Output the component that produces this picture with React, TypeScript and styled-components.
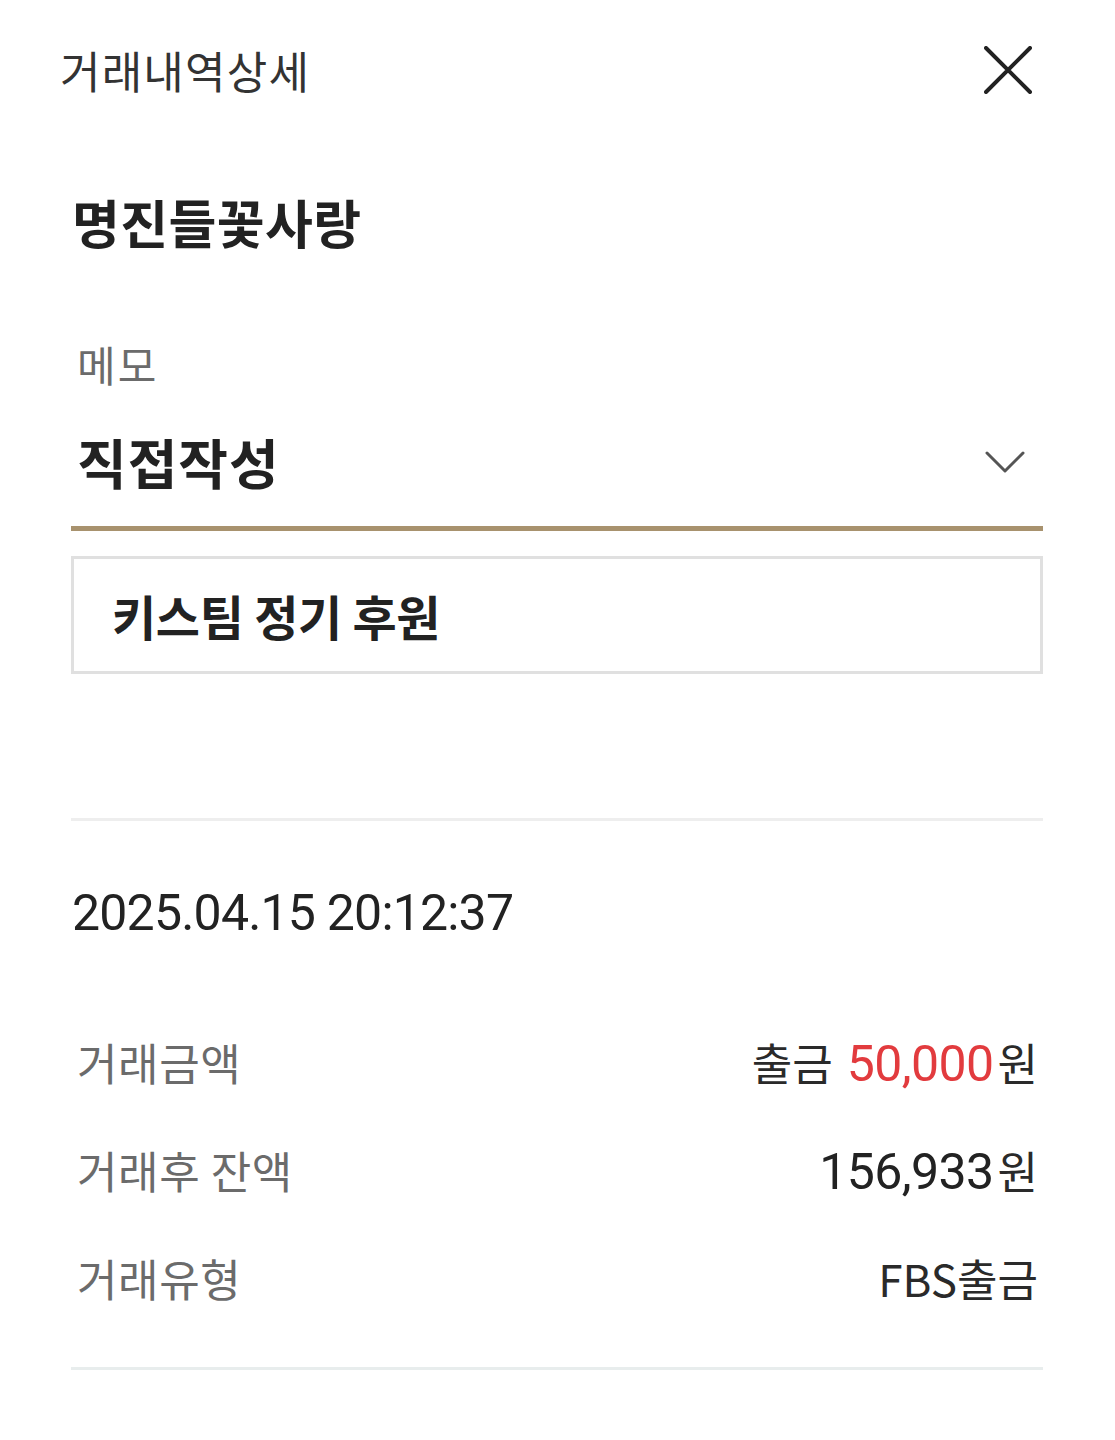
import React from "react";
import styled, { createGlobalStyle } from "styled-components";

const Global = createGlobalStyle`
  html, body { margin: 0; padding: 0; background: #ffffff; }
  body { font-family: "Noto Sans CJK KR", "Noto Sans", sans-serif; color: #222; }
  * { box-sizing: border-box; }
`;

const Page = styled.div`
  width: 1115px;
  min-height: 1440px;
  background: #fff;
`;

const Header = styled.header`
  height: 140px;
  display: flex;
  align-items: center;
  justify-content: space-between;
  padding: 0 83px 0 60px;
`;

const Title = styled.h1`
  margin: 0;
  font-size: 44px;
  font-weight: 400;
  color: #333;
  line-height: 60px;
  letter-spacing: 1.2px;
`;

const CloseButton = styled.button`
  width: 48px;
  height: 48px;
  padding: 0;
  border: 0;
  background: none;
  display: flex;
`;

const Content = styled.main`
  padding: 0 72px 0 71px;
  display: flex;
  flex-direction: column;
`;

const Name = styled.div`
  margin-top: 52px;
  height: 60px;
  line-height: 60px;
  font-size: 52px;
  font-weight: 700;
  color: #222;
  padding-left: 1px;
  letter-spacing: 0.4px;
`;

const FieldLabel = styled.div`
  margin-top: 87px;
  height: 50px;
  line-height: 50px;
  font-size: 42px;
  color: #6b6b6b;
  padding-left: 6px;
  letter-spacing: 2px;
`;

const Select = styled.div`
  margin-top: 38px;
  display: flex;
  align-items: flex-start;
  justify-content: space-between;
  padding: 0 18px 29px 6px;
  border-bottom: 5px solid #a8926e;
`;

const SelectText = styled.span`
  height: 70px;
  line-height: 70px;
  font-size: 54px;
  font-weight: 700;
  color: #222;
  letter-spacing: 1px;
`;

const Chevron = styled.svg`
  margin-top: 23px;
`;

const MemoBox = styled.div`
  margin-top: 25px;
  height: 118px;
  border: 3px solid #e0e0e0;
  display: flex;
  align-items: center;
  padding-left: 38px;
  font-size: 48px;
  font-weight: 700;
  color: #222;
  letter-spacing: -0.3px;
`;

const Divider = styled.hr<{ $top: number; $color: string }>`
  margin: ${(p) => p.$top}px 0 0;
  border: 0;
  height: 3px;
  background: ${(p) => p.$color};
`;

const DateText = styled.div`
  margin-top: 62px;
  height: 60px;
  line-height: 60px;
  font-family: Roboto, "Noto Sans CJK KR", sans-serif;
  font-size: 50px;
  font-weight: 400;
  color: #222;
  letter-spacing: -0.8px;
  padding-left: 1px;
`;

const Rows = styled.div`
  margin-top: 65px;
  display: flex;
  flex-direction: column;
`;

const Row = styled.div`
  height: 108px;
  display: flex;
  align-items: center;
  justify-content: space-between;
  padding: 0 5px 0 6px;
`;

const RowLabel = styled.span`
  font-size: 44px;
  color: #6b6b6b;
  letter-spacing: 0.6px;
`;

const RowValue = styled.span`
  display: flex;
  align-items: baseline;
  font-size: 44px;
  color: #2a2a2a;
`;

const Num = styled.span<{ $red?: boolean }>`
  font-family: Roboto, sans-serif;
  font-size: 50px;
  color: ${(p) => (p.$red ? "#e23b3e" : "#222")};
  letter-spacing: -0.6px;
  margin-right: 4px;
`;

const Gap = styled.span`
  display: inline-block;
  width: 14px;
`;

export default function App() {
  return (
    <Page>
      <Global />
      <Header>
        <Title>거래내역상세</Title>
        <CloseButton aria-label="닫기">
          <svg width="48" height="48" viewBox="0 0 48 48">
            <path d="M2 2 L46 46 M46 2 L2 46" stroke="#222" strokeWidth="4" strokeLinecap="round" />
          </svg>
        </CloseButton>
      </Header>
      <Content>
        <Name>명진들꽃사랑</Name>
        <FieldLabel>메모</FieldLabel>
        <Select>
          <SelectText>직접작성</SelectText>
          <Chevron width="40" height="24" viewBox="0 0 40 24">
            <path d="M2 3 L20 21 L38 3" fill="none" stroke="#555" strokeWidth="3" strokeLinecap="round" strokeLinejoin="round" />
          </Chevron>
        </Select>
        <MemoBox>키스팀 정기 후원</MemoBox>
        <Divider $top={144} $color="#eeeeee" />
        <DateText>2025.04.15 20:12:37</DateText>
        <Rows>
          <Row>
            <RowLabel>거래금액</RowLabel>
            <RowValue>
              출금<Gap />
              <Num $red>50,000</Num>원
            </RowValue>
          </Row>
          <Row>
            <RowLabel>거래후 잔액</RowLabel>
            <RowValue>
              <Num>156,933</Num>원
            </RowValue>
          </Row>
          <Row>
            <RowLabel>거래유형</RowLabel>
            <RowValue>FBS출금</RowValue>
          </Row>
        </Rows>
        <Divider $top={35} $color="#e8eded" />
      </Content>
    </Page>
  );
}
